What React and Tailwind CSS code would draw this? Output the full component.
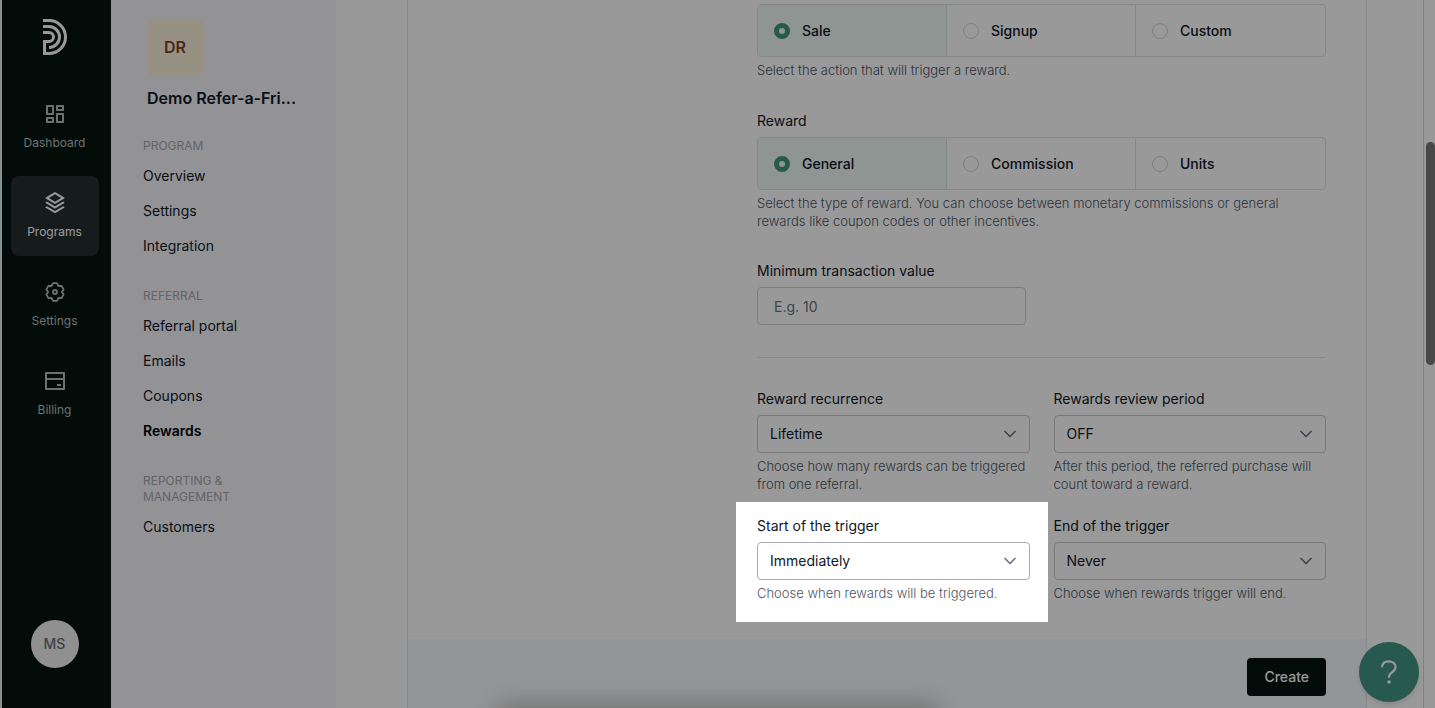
import { useState } from 'react';
import { ChevronDown } from 'lucide-react';
import { RiDashboardLine, RiStackLine, RiBankCardLine } from 'react-icons/ri';
import clsx from 'clsx';

function GearIcon({ className }) {
  return (
    <svg viewBox="0 0 24 24" className={className} fill="none" stroke="currentColor" strokeWidth="1.8" strokeLinejoin="round">
      <path d="M10 3.2H14L15.45 6L18.6 5.9L20.6 9.4L18.9 12L20.6 14.6L18.6 18.1L15.45 18L14 20.8H10L8.55 18L5.4 18.1L3.4 14.6L5.1 12L3.4 9.4L5.4 5.9L8.55 6Z" />
      <circle cx="12" cy="12" r="2" />
    </svg>
  );
}

const navItems = [
  { label: 'Dashboard', icon: RiDashboardLine },
  { label: 'Programs', icon: RiStackLine, active: true },
  { label: 'Settings', icon: GearIcon },
  { label: 'Billing', icon: RiBankCardLine },
];

const menuGroups = [
  { title: 'Program', links: ['Overview', 'Settings', 'Integration'] },
  { title: 'Referral', links: ['Referral portal', 'Emails', 'Coupons', 'Rewards'] },
  { title: 'Reporting & Management', links: ['Customers'] },
];

function Logo() {
  return (
    <svg viewBox="0 0 24 36" className="h-9 w-6" fill="none" stroke="#ffffff" strokeWidth="3" aria-label="Home">
      <path d="M0 1.5H6A16.5 16.5 0 0 1 6 34.5H1.5V22.5H6A4.5 4.5 0 0 0 6 13.5H0" />
      <path d="M0 7.5H6A10.5 10.5 0 0 1 6 28.5" />
    </svg>
  );
}

function NavRail() {
  return (
    <nav className="flex w-[109px] shrink-0 flex-col items-center bg-[#05140f] pr-1">
      <a href="#home" className="mt-[19px]">
        <Logo />
      </a>
      <div className="mt-8 flex flex-col gap-[9px]">
        {navItems.map(({ label, icon: Icon, active }) => (
          <a
            key={label}
            href={`#${label.toLowerCase()}`}
            className={clsx(
              'flex h-20 w-[88px] flex-col items-center rounded-lg pt-[15px]',
              active ? 'bg-[#25302e] text-white' : 'text-[#b3bfbc]'
            )}
          >
            <Icon className="size-6" />
            <span className="mt-[9px] text-xs leading-4">{label}</span>
          </a>
        ))}
      </div>
      <button
        type="button"
        className="mt-auto mb-10 size-12 rounded-full bg-[#f1f1f2] text-sm font-medium text-[#6b6f72]"
      >
        MS
      </button>
    </nav>
  );
}

function ProgramMenu() {
  return (
    <aside className="w-[225px] shrink-0 bg-[#f5f5f8] px-8 pt-[19px]">
      <div className="ml-1 flex size-14 items-center justify-center rounded bg-[#fbf2da] text-base font-semibold text-[#7a4520]">
        DR
      </div>
      <h2 className="mt-[11px] mb-7 ml-1 text-base leading-6 font-semibold whitespace-nowrap text-gray-900">Demo Refer-a-Fri...</h2>
      {menuGroups.map(({ title, links }) => (
        <section key={title} className="mb-[25px]">
          <h3 className="mb-1 w-24 text-xs leading-4 text-[#a6a8ad] uppercase">{title}</h3>
          {links.map((link) => (
            <a
              key={link}
              href="#menu"
              className={clsx(
                'block text-sm leading-[35px]',
                link === 'Rewards' ? 'font-semibold text-black' : 'text-gray-900'
              )}
            >
              {link}
            </a>
          ))}
        </section>
      ))}
    </aside>
  );
}

function HelpText({ children }) {
  return <p className="mt-1 text-[13px] leading-[18px] font-light text-gray-600">{children}</p>;
}

function RadioCards({ name, options, value, onChange }) {
  return (
    <div className="grid h-[53px] grid-cols-3 divide-x divide-[#dfe2e3] overflow-hidden rounded border border-[#dfe2e3]">
      {options.map((option) => (
        <label
          key={option}
          className={clsx(
            'flex items-center gap-3 pl-4 text-sm font-medium text-gray-900',
            value === option && 'bg-[#eef8f6]'
          )}
        >
          <input
            type="radio"
            name={name}
            checked={value === option}
            onChange={() => onChange(option)}
            className="size-4 appearance-none rounded-full border border-gray-300 checked:border-[5px] checked:border-[#43967f]"
          />
          {option}
        </label>
      ))}
    </div>
  );
}

function SelectField({ id, label, options, help, highlighted }) {
  return (
    <div className="relative">
      <label htmlFor={id} className="mb-1.5 block text-sm leading-5 text-gray-900">
        {label}
      </label>
      <div className="relative">
        <select
          id={id}
          className={clsx(
            'h-[38px] w-full appearance-none rounded border bg-white pr-10 pl-3 text-sm text-gray-900',
            highlighted ? 'border-[#a9abae]' : 'border-[#c6c8cb]'
          )}
        >
          {options.map((option) => (
            <option key={option}>{option}</option>
          ))}
        </select>
        <ChevronDown className="pointer-events-none absolute top-[9px] right-2.5 size-5 text-gray-500" strokeWidth={2} />
      </div>
      <HelpText>{help}</HelpText>
      {/* spotlight: everything outside this box is dimmed by its shadow */}
      {highlighted && (
        <div className="pointer-events-none absolute -top-3.5 -right-[18px] -bottom-5 -left-[21px] z-50 shadow-[0_0_0_3000px_rgba(0,0,0,0.4)]" />
      )}
    </div>
  );
}

function RewardForm() {
  const [action, setAction] = useState('Sale');
  const [reward, setReward] = useState('General');

  return (
    <form className="flex min-h-full flex-col border-x border-gray-200">
      <div className="grid grid-cols-[309px_1fr] px-10 pt-1 pb-[37px]">
        <div className="col-start-2">
          <RadioCards name="action" options={['Sale', 'Signup', 'Custom']} value={action} onChange={setAction} />
          <HelpText>Select the action that will trigger a reward.</HelpText>

          <fieldset className="mt-8">
            <legend className="mb-1.5 text-sm leading-5 text-gray-900">Reward</legend>
            <RadioCards name="reward" options={['General', 'Commission', 'Units']} value={reward} onChange={setReward} />
            <HelpText>
              Select the type of reward. You can choose between monetary commissions or general rewards like coupon
              codes or other incentives.
            </HelpText>
          </fieldset>

          <div className="mt-[31px]">
            <label htmlFor="minimum" className="mb-1.5 block text-sm leading-5 text-gray-900">
              Minimum transaction value
            </label>
            <input
              id="minimum"
              type="text"
              placeholder="E.g. 10"
              className="block h-[38px] w-[269px] rounded border border-[#cfd1d4] px-4 text-sm placeholder:text-gray-500"
            />
          </div>

          <hr className="mt-8 mb-[31px] border-gray-200" />

          <div className="grid grid-cols-2 gap-x-6 gap-y-[23px]">
            <SelectField
              id="recurrence"
              label="Reward recurrence"
              options={['Lifetime', 'Once']}
              help="Choose how many rewards can be triggered from one referral."
            />
            <SelectField
              id="review"
              label="Rewards review period"
              options={['OFF', '30 days']}
              help="After this period, the referred purchase will count toward a reward."
            />
            <SelectField
              id="start"
              label="Start of the trigger"
              options={['Immediately', 'Later']}
              help="Choose when rewards will be triggered."
              highlighted
            />
            <SelectField
              id="end"
              label="End of the trigger"
              options={['Never', 'On date']}
              help="Choose when rewards trigger will end."
            />
          </div>
        </div>
      </div>
      <footer className="flex flex-1 items-start justify-end bg-[#f6f9fb] px-10 py-[19px]">
        <button type="button" className="h-[38px] rounded bg-[#05140f] px-[17px] text-sm font-medium text-white">
          Create
        </button>
      </footer>
    </form>
  );
}

export default function App() {
  return (
    <div className="relative flex h-screen overflow-hidden bg-white font-['Inter',sans-serif]">
      <div className="w-0.5 shrink-0 bg-[#e2f6f3]" />
      <NavRail />
      <ProgramMenu />
      <main className="min-w-0 flex-1 pr-14 pl-[71px]">
        <RewardForm />
      </main>
      <div className="w-3 shrink-0 border-l border-gray-300 pl-0.5">
        <div className="mt-[142px] h-[223px] rounded-full bg-[#797979]" />
      </div>
      <button
        type="button"
        aria-label="Help"
        className="absolute right-4 bottom-1.5 flex size-[60px] items-center justify-center rounded-full bg-[#439483] text-white shadow-md"
      >
        <svg viewBox="0 0 16 24" className="h-6 w-4" fill="none" stroke="currentColor" strokeWidth="2.2" strokeLinecap="round">
          <path d="M1.2 6.5C1.5 3.2 4 1.3 7.6 1.3C11.4 1.3 14.6 3.4 14.6 7C14.6 9.6 13 11 11 12.3C8.9 13.7 8 14.6 8 17" />
          <circle cx="8" cy="22" r="1.8" fill="currentColor" stroke="none" />
        </svg>
      </button>
      <div className="pointer-events-none absolute -bottom-5 left-1/2 h-5 w-[440px] -translate-x-1/2 rounded-full shadow-[0_0_24px_4px_rgba(60,45,40,0.3)]" />
    </div>
  );
}
